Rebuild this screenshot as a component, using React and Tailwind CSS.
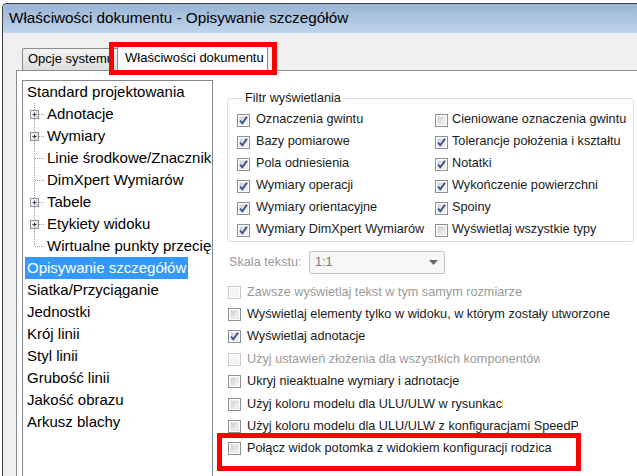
import React from "react";

/* ---------- tree data ---------- */
const TREE = [
  { label: "Standard projektowania", level: 0 },
  { label: "Adnotacje", level: 1, plus: true },
  { label: "Wymiary", level: 1, plus: true },
  { label: "Linie środkowe/Znaczniki", level: 1 },
  { label: "DimXpert Wymiarów", level: 1 },
  { label: "Tabele", level: 1, plus: true },
  { label: "Etykiety widoku", level: 1, plus: true },
  { label: "Wirtualne punkty przecięcia", level: 1, last: true },
  { label: "Opisywanie szczegółów", level: 0, selected: true },
  { label: "Siatka/Przyciąganie", level: 0 },
  { label: "Jednostki", level: 0 },
  { label: "Krój linii", level: 0 },
  { label: "Styl linii", level: 0 },
  { label: "Grubość linii", level: 0 },
  { label: "Jakość obrazu", level: 0 },
  { label: "Arkusz blachy", level: 0 },
];

const FILTER = [
  ["Oznaczenia gwintu", true, "Cieniowane oznaczenia gwintu", false],
  ["Bazy pomiarowe", true, "Tolerancje położenia i kształtu", true],
  ["Pola odniesienia", true, "Notatki", true],
  ["Wymiary operacji", true, "Wykończenie powierzchni", true],
  ["Wymiary orientacyjne", true, "Spoiny", true],
  ["Wymiary DimXpert Wymiarów", true, "Wyświetlaj wszystkie typy", false],
];

const OPTIONS = [
  { label: "Zawsze wyświetlaj tekst w tym samym rozmiarze", disabled: true, w: "max-w-[359px]" },
  { label: "Wyświetlaj elementy tylko w widoku, w którym zostały utworzone", w: "max-w-[369px]" },
  { label: "Wyświetlaj adnotacje", checked: true, w: "max-w-[380px]" },
  { label: "Użyj ustawień złożenia dla wszystkich komponentów", disabled: true, w: "max-w-[293px]" },
  { label: "Ukryj nieaktualne wymiary i adnotacje", w: "max-w-[380px]" },
  { label: "Użyj koloru modelu dla ULU/ULW w rysunkach", w: "max-w-[256px]" },
  { label: "Użyj koloru modelu dla ULU/ULW z konfiguracjami SpeedPak", w: "max-w-[331px]" },
  { label: "Połącz widok potomka z widokiem konfiguracji rodzica", w: "max-w-[380px]" },
];

/* ---------- win7 style checkbox ---------- */
const Check = ({ checked, disabled }) => (
  <span
    className={`relative block w-[13px] h-[13px] shrink-0 border bg-white ${
      disabled ? "border-[#c9c9c9]" : "border-[#8e8f8f]"
    }`}
  >
    <span
      className={`absolute inset-[1px] border ${
        disabled
          ? "border-[#f1f1f1] bg-[#f4f4f4]"
          : "border-[#eaeaea] bg-gradient-to-br from-[#cfcfcf] to-[#f7f7f7]"
      }`}
    />
    {checked && (
      <svg className="absolute inset-0" width="11" height="11" viewBox="0 0 11 11">
        <path d="M2 5.5 L4.3 8.3 L9 1.8" fill="none" stroke="#3a4d8c" strokeWidth="1.9" />
      </svg>
    )}
  </span>
);

/* ---------- tree connector ---------- */
const Connector = ({ plus, last }) => (
  <svg width="19" height="22" viewBox="0 0 19 22" className="shrink-0">
    <line
      x1="7.5"
      y1="0"
      x2="7.5"
      y2={last ? 11 : 22}
      stroke="#a0a0a0"
      strokeDasharray="1 1"
    />
    <line x1="8" y1="11.5" x2="18" y2="11.5" stroke="#a0a0a0" strokeDasharray="1 1" />
    {plus && (
      <>
        <rect x="3.5" y="7.5" width="8" height="8" fill="url(#pg)" stroke="#919191" />
        <path d="M5.5 11.5 H9.5 M7.5 9.5 V13.5" stroke="#2b3a5a" strokeWidth="1" />
      </>
    )}
  </svg>
);

const App = () => {
  return (
    <div
      className="relative w-[637px] h-[476px] overflow-hidden bg-white text-black"
      style={{ fontFamily: '"Liberation Sans", Arial, sans-serif' }}
    >
      <svg width="0" height="0" className="absolute">
        <defs>
          <linearGradient id="pg" x1="0" y1="0" x2="1" y2="1">
            <stop offset="0" stopColor="#ffffff" />
            <stop offset="1" stopColor="#d6d6d6" />
          </linearGradient>
        </defs>
      </svg>

      {/* window */}
      <div className="ml-[2px] mt-[3px] h-[473px] flex flex-col border-l border-t border-[#3c3c3c] rounded-tl-[5px] overflow-hidden">
        {/* title bar */}
        <div className="h-[29px] shrink-0 flex items-center pl-[6px] bg-gradient-to-b from-[#98b4d4] to-[#c0d5ec] text-[15.3px]">
          Właściwości dokumentu - Opisywanie szczegółów
        </div>

        {/* body */}
        <div className="flex-1 flex bg-[#f0f0f0] min-h-0">
          <div className="w-[13px] shrink-0" />
          <div className="flex-1 flex flex-col min-w-0">
            {/* tabs */}
            <div className="h-[37px] shrink-0 flex items-end pl-[6px]">
              <div className="w-[95px] h-[22px] overflow-hidden whitespace-nowrap border-t border-l border-[#898c95] rounded-tl-[2px] bg-gradient-to-b from-[#f3f3f3] to-[#dedede] pl-[5px] text-[13px] leading-[20px]">
                Opcje systemu
              </div>
              <div className="relative z-10 -mb-px w-[151px] h-[26px] border-t border-l border-r border-[#898c95] rounded-t-[2px] bg-white pl-[7px] pt-[2px] text-[13px] leading-[20px] whitespace-nowrap">
                Właściwości dokumentu
              </div>
            </div>

            {/* tab page */}
            <div className="flex-1 flex border-t border-l border-[#898c95] bg-white min-h-0">
              {/* tree */}
              <div className="ml-[5px] mt-[9px] w-[191px] h-[420px] shrink-0 border border-[#828790] overflow-hidden text-[15px]">
                {TREE.map((t) => (
                  <div key={t.label} className="h-[22px] flex items-center whitespace-nowrap">
                    {t.level === 0 ? (
                      <span
                        className={`ml-[2px] px-[2px] leading-[22px] ${
                          t.selected ? "bg-[#3399ff] text-white" : ""
                        }`}
                      >
                        {t.label}
                      </span>
                    ) : (
                      <>
                        <span className="w-[4px] shrink-0" />
                        <Connector plus={t.plus} last={t.last} />
                        <span className="pl-[1px]">{t.label}</span>
                      </>
                    )}
                  </div>
                ))}
              </div>

              {/* options */}
              <div className="ml-[14px] mt-[20px] flex-1 flex flex-col text-[12.7px] text-[#1a1a1a]">
                <fieldset className="w-[407px] border border-[#d5dfe5] rounded-[3px] pl-[9px] pb-0">
                  <legend className="ml-[6px] px-[2px] leading-[15px]">Filtr wyświetlania</legend>
                  <div className="grid grid-cols-[198px_1fr] mt-[3px]">
                    {FILTER.map(([a, ac, b, bc]) => (
                      <React.Fragment key={a}>
                        <div className="h-[22px] flex items-center gap-[6px] whitespace-nowrap">
                          <Check checked={ac} />
                          <span>{a}</span>
                        </div>
                        <div className="h-[22px] flex items-center gap-[4px] whitespace-nowrap">
                          <Check checked={bc} />
                          <span>{b}</span>
                        </div>
                      </React.Fragment>
                    ))}
                  </div>
                </fieldset>

                {/* text scale */}
                <div className="mt-[9px] h-[23px] flex items-center text-[#9a9a9a]">
                  <span className="ml-[2px] w-[80px]">Skala tekstu:</span>
                  <div className="w-[136px] h-[23px] flex items-center justify-between border border-[#c3c3c3] rounded-[2px] bg-[#f7f7f7] pl-[5px] pr-[6px] text-[#7a7a7a]">
                    <span>1:1</span>
                    <svg width="9" height="5" viewBox="0 0 9 5">
                      <path d="M0 0 H9 L4.5 5 Z" fill="#6a6a6a" />
                    </svg>
                  </div>
                </div>

                {/* options list */}
                <div className="mt-[7px] flex flex-col">
                  {OPTIONS.map((o) => (
                    <div key={o.label} className="h-[22.4px] flex items-center gap-[6px] ml-[1px]">
                      <Check checked={o.checked} disabled={o.disabled} />
                      <span
                        className={`overflow-hidden whitespace-nowrap ${o.w} ${
                          o.disabled ? "text-[#9a9a9a]" : ""
                        }`}
                      >
                        {o.label}
                      </span>
                    </div>
                  ))}
                </div>
              </div>
            </div>
          </div>
        </div>
      </div>

      {/* red highlight frames */}
      <div className="absolute left-[109px] top-[42px] w-[168px] h-[33px] border-[5px] border-[#ff0000] pointer-events-none z-20" />
      <div className="absolute left-[217px] top-[433px] w-[364px] h-[38px] border-[5px] border-[#ff0000] pointer-events-none z-20" />
    </div>
  );
};

export default App;
